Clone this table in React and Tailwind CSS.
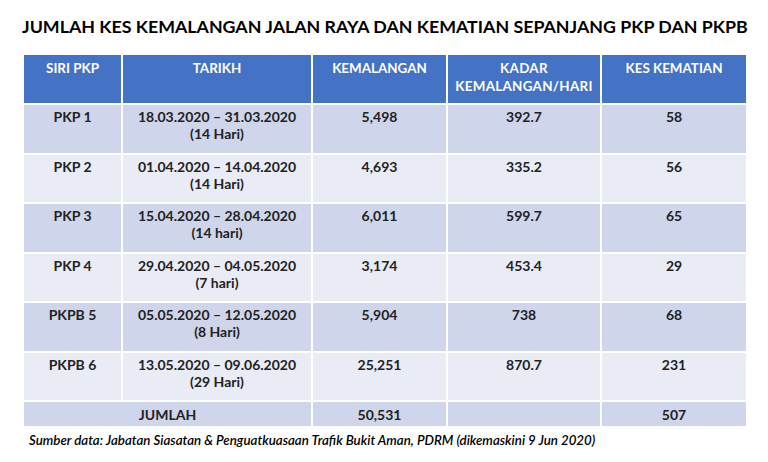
const ROWS = [
  ['PKP 1', '18.03.2020 – 31.03.2020', '(14 Hari)', '5,498', '392.7', '58'],
  ['PKP 2', '01.04.2020 – 14.04.2020', '(14 Hari)', '4,693', '335.2', '56'],
  ['PKP 3', '15.04.2020 – 28.04.2020', '(14 hari)', '6,011', '599.7', '65'],
  ['PKP 4', '29.04.2020 – 04.05.2020', '(7 hari)', '3,174', '453.4', '29'],
  ['PKPB 5', '05.05.2020 – 12.05.2020', '(8 Hari)', '5,904', '738', '68'],
  ['PKPB 6', '13.05.2020 – 09.06.2020', '(29 Hari)', '25,251', '870.7', '231'],
]

const cell = 'border-2 border-white align-top text-center p-0'

export default function App() {
  return (
    <div className="w-[768px] h-[462px] bg-white overflow-hidden text-[#222]" style={{ fontFamily: 'Lato, "Open Sans", sans-serif' }}>
      <h1 className="pt-[15px] pl-[22px] text-[17.8px] leading-[22px] font-bold text-black whitespace-nowrap">
        JUMLAH KES KEMALANGAN JALAN RAYA DAN KEMATIAN SEPANJANG PKP DAN PKPB
      </h1>
      <table className="ml-[22px] mt-[16px] border-collapse table-fixed w-[724px] text-[14px] leading-[17px] font-bold">
        <colgroup>
          <col className="w-[99px]" />
          <col className="w-[190px]" />
          <col className="w-[135px]" />
          <col className="w-[154px]" />
          <col className="w-[146px]" />
        </colgroup>
        <thead>
          <tr className="bg-[#4472c4] text-white h-[50px] text-[13.4px] leading-[18px] font-bold">
            <th className={`${cell} pt-[4px]`}>SIRI PKP</th>
            <th className={`${cell} pt-[4px]`}>TARIKH</th>
            <th className={`${cell} pt-[4px]`}>KEMALANGAN</th>
            <th className={`${cell} pt-[4px] tracking-[0.3px]`}>KADAR<br />KEMALANGAN/HARI</th>
            <th className={`${cell} pt-[4px]`}>KES KEMATIAN</th>
          </tr>
        </thead>
        <tbody>
          {ROWS.map((r, i) => (
            <tr key={r[0]} className={`h-[49.5px] ${i % 2 === 0 ? 'bg-[#cfd5ea]' : 'bg-[#e9ebf5]'}`}>
              <td className={`${cell} pt-[3px]`}>{r[0]}</td>
              <td className={`${cell} pt-[3px]`}>{r[1]}<br />{r[2]}</td>
              <td className={`${cell} pt-[3px]`}>{r[3]}</td>
              <td className={`${cell} pt-[3px]`}>{r[4]}</td>
              <td className={`${cell} pt-[3px]`}>{r[5]}</td>
            </tr>
          ))}
          <tr className="h-[26px] bg-[#cfd5ea]">
            <td className={`${cell} !align-middle`} colSpan={2}>JUMLAH</td>
            <td className={`${cell} !align-middle`}>50,531</td>
            <td className={`${cell} !align-middle`}></td>
            <td className={`${cell} !align-middle`}>507</td>
          </tr>
        </tbody>
      </table>
      <p className="pl-[29px] mt-[4px] text-[13.3px] leading-[16px] italic font-semibold text-black whitespace-nowrap">
        Sumber data: Jabatan Siasatan &amp; Penguatkuasaan Trafik Bukit Aman, PDRM (dikemaskini 9 Jun 2020)
      </p>
    </div>
  )
}
